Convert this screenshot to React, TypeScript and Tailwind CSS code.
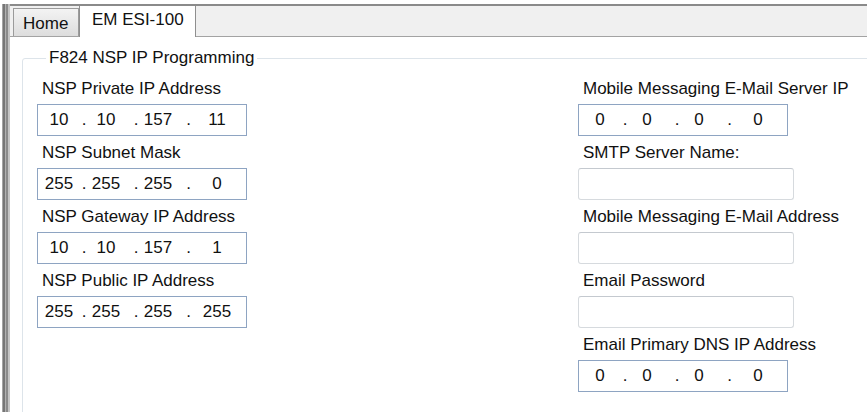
import React from 'react';

// Segment cells of the Win32-style IP address control: field, dot, field, dot ...
const ipCells = ['w-[42px]', 'w-[8px]', 'w-[36px]', 'w-[24px]', 'w-[20px]', 'w-[41px]', 'w-[16px]'];

const IpBox = ({ value }: { value: string }) => {
  const parts = value.split('.');
  const cells = [parts[0], '.', parts[1], '.', parts[2], '.', parts[3]];
  return (
    <div className="w-[210px] h-[32px] border border-[#8ea4c2] bg-white flex items-center">
      {cells.map((c, i) => (
        <div key={i} className={`${ipCells[i]} flex justify-center leading-[20px]`}>
          <span className="whitespace-nowrap">{c}</span>
        </div>
      ))}
    </div>
  );
};

const TextBox = () => (
  <div className="w-[216px] h-[32px] rounded-[3px] border border-[#d6dade] border-t-[#c4c9cf] bg-white" />
);

const Field = ({ label, children }: { label: string; children: React.ReactNode }) => (
  <div className="flex flex-col">
    <div className="h-[21px] pt-[1px] leading-[20px] pl-[5px] whitespace-nowrap">{label}</div>
    <div className="mt-[5px] mb-[6px]">{children}</div>
  </div>
);

export default function App() {
  return (
    <div className="w-[867px] h-[412px] bg-white overflow-hidden text-[17px] text-[#111] font-['Liberation_Sans',Arial,sans-serif]">
      <div className="flex h-full pt-[4px] pl-[2px]">
        {/* window frame edge */}
        <div className="w-[8px] h-full flex shrink-0">
          <div className="w-[1px] bg-[#a4a4a4]" />
          <div className="w-[2px] bg-[#767676]" />
          <div className="w-[1px] bg-[#b0b0b0]" />
          <div className="w-[2px] bg-[#8a8a8a]" />
          <div className="w-[2px] bg-[#c4c4c4]" />
        </div>

        <div className="w-[1000px] shrink-0 flex flex-col">
          {/* tab strip */}
          <div className="h-[33px] border-t-2 border-t-[#8a8a8a] border-b border-b-[#a3a3a3] bg-[#f0f0f0] flex items-end pl-[3px]">
            <div className="w-[66px] h-[28px] border border-b-0 border-[#9b9b9b] bg-gradient-to-b from-[#f3f3f3] to-[#dddddd] pl-[9px] pt-[5px] leading-[20px]">
              Home
            </div>
            <div className="w-[117px] h-[31px] -mb-[1px] border-x border-[#8f8f8f] bg-white pl-[12px] pt-[4px] leading-[20px] whitespace-nowrap">
              EM ESI-100
            </div>
          </div>

          {/* tab page */}
          <div className="flex-1 bg-white pl-[12px] pt-[11px]">
            <fieldset className="w-[960px] h-[400px] border border-[#dde4ea] rounded-[3px] pl-[14px] pt-[10px]">
              <legend className="ml-[9px] px-[3px] leading-[20px]">F824 NSP IP Programming</legend>
              <div className="grid grid-cols-[541px_1fr]">
                <div className="flex flex-col">
                  <Field label="NSP Private IP Address">
                    <IpBox value="10.10.157.11" />
                  </Field>
                  <Field label="NSP Subnet Mask">
                    <IpBox value="255.255.255.0" />
                  </Field>
                  <Field label="NSP Gateway IP Address">
                    <IpBox value="10.10.157.1" />
                  </Field>
                  <Field label="NSP Public IP Address">
                    <IpBox value="255.255.255.255" />
                  </Field>
                </div>
                <div className="flex flex-col">
                  <Field label="Mobile Messaging E-Mail Server IP">
                    <IpBox value="0.0.0.0" />
                  </Field>
                  <Field label="SMTP Server Name:">
                    <TextBox />
                  </Field>
                  <Field label="Mobile Messaging E-Mail Address">
                    <TextBox />
                  </Field>
                  <Field label="Email Password">
                    <TextBox />
                  </Field>
                  <Field label="Email Primary DNS IP Address">
                    <IpBox value="0.0.0.0" />
                  </Field>
                </div>
              </div>
            </fieldset>
          </div>
        </div>
      </div>
    </div>
  );
}
